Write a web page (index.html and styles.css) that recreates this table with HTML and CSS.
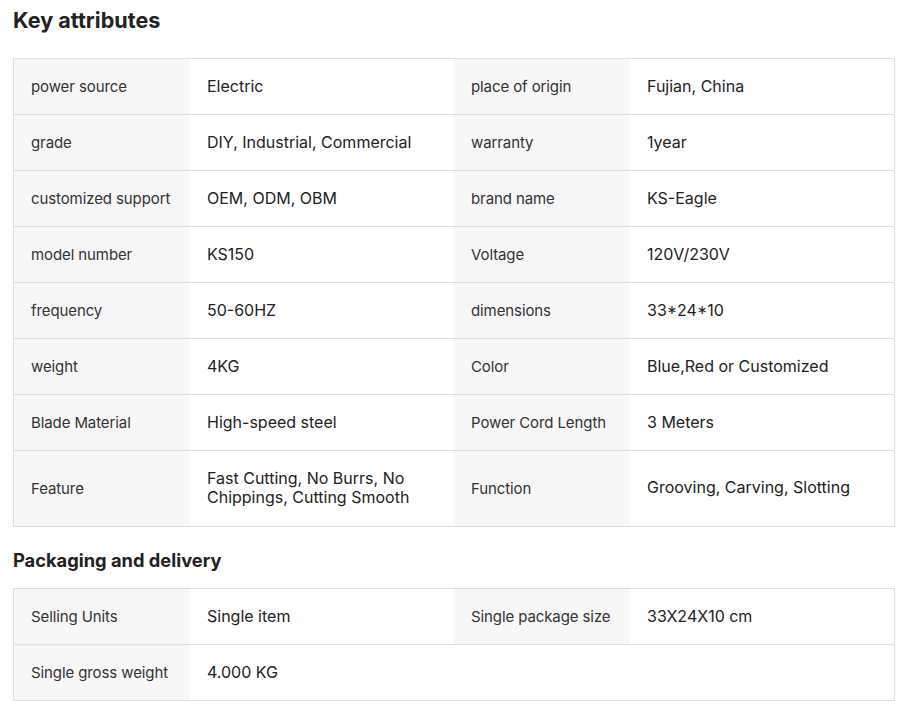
FILE: index.html
```html
<!DOCTYPE html>
<html>
<head>
<meta charset="utf-8">
<link rel="stylesheet" href="styles.css">
</head>
<body>
<h2 class="title">Key attributes</h2>
<div class="attrs">
  <div class="row"><div class="lbl">power source</div><div class="val">Electric</div><div class="lbl">place of origin</div><div class="val">Fujian, China</div></div>
  <div class="row"><div class="lbl">grade</div><div class="val">DIY, Industrial, Commercial</div><div class="lbl">warranty</div><div class="val">1year</div></div>
  <div class="row"><div class="lbl">customized support</div><div class="val">OEM, ODM, OBM</div><div class="lbl">brand name</div><div class="val">KS-Eagle</div></div>
  <div class="row"><div class="lbl">model number</div><div class="val">KS150</div><div class="lbl">Voltage</div><div class="val">120V/230V</div></div>
  <div class="row"><div class="lbl">frequency</div><div class="val">50-60HZ</div><div class="lbl">dimensions</div><div class="val">33*24*10</div></div>
  <div class="row"><div class="lbl">weight</div><div class="val">4KG</div><div class="lbl">Color</div><div class="val">Blue,Red or Customized</div></div>
  <div class="row"><div class="lbl">Blade Material</div><div class="val">High-speed steel</div><div class="lbl">Power Cord Length</div><div class="val">3 Meters</div></div>
  <div class="row tall"><div class="lbl">Feature</div><div class="val">Fast Cutting, No Burrs, No Chippings, Cutting Smooth</div><div class="lbl">Function</div><div class="val">Grooving, Carving, Slotting</div></div>
</div>
<h3 class="subtitle">Packaging and delivery</h3>
<div class="attrs">
  <div class="row"><div class="lbl">Selling Units</div><div class="val">Single item</div><div class="lbl">Single package size</div><div class="val">33X24X10 cm</div></div>
  <div class="row"><div class="lbl">Single gross weight</div><div class="val">4.000 KG</div></div>
</div>
</body>
</html>
```
FILE: styles.css
```css
html, body {
  margin: 0;
  padding: 0;
  background: #fff;
}
body {
  padding: 0 7px 0 13px;
  font-family: Inter, "Noto Sans", sans-serif;
  color: #222;
}
.title {
  margin: 0;
  padding-top: 6px;
  height: 52px;
  font-size: 21.6px;
  font-weight: 700;
  line-height: 28px;
  color: #222;
}
.subtitle {
  margin: 0;
  height: 61px;
  padding-top: 5px;
  box-sizing: border-box;
  display: flex;
  align-items: center;
  font-size: 18.3px;
  font-weight: 700;
  color: #222;
}
.attrs {
  width: 880px;
  border: 1px solid #dedede;
  border-bottom: none;
}
.row {
  display: grid;
  grid-template-columns: 176px 264px 176px 264px;
  min-height: 55px;
  border-bottom: 1px solid #dedede;
}
.row.tall {
  min-height: 75px;
}
.lbl, .val {
  display: flex;
  align-items: center;
  padding: 8px 17px;
  line-height: 19px;
}
.lbl {
  background: #f7f7f7;
  font-size: 15px;
  letter-spacing: -0.1px;
  color: #333;
}
.val {
  font-size: 16px;
  color: #222;
  font-weight: 400;
}
.tall .val {
  padding-bottom: 10px;
}
```
